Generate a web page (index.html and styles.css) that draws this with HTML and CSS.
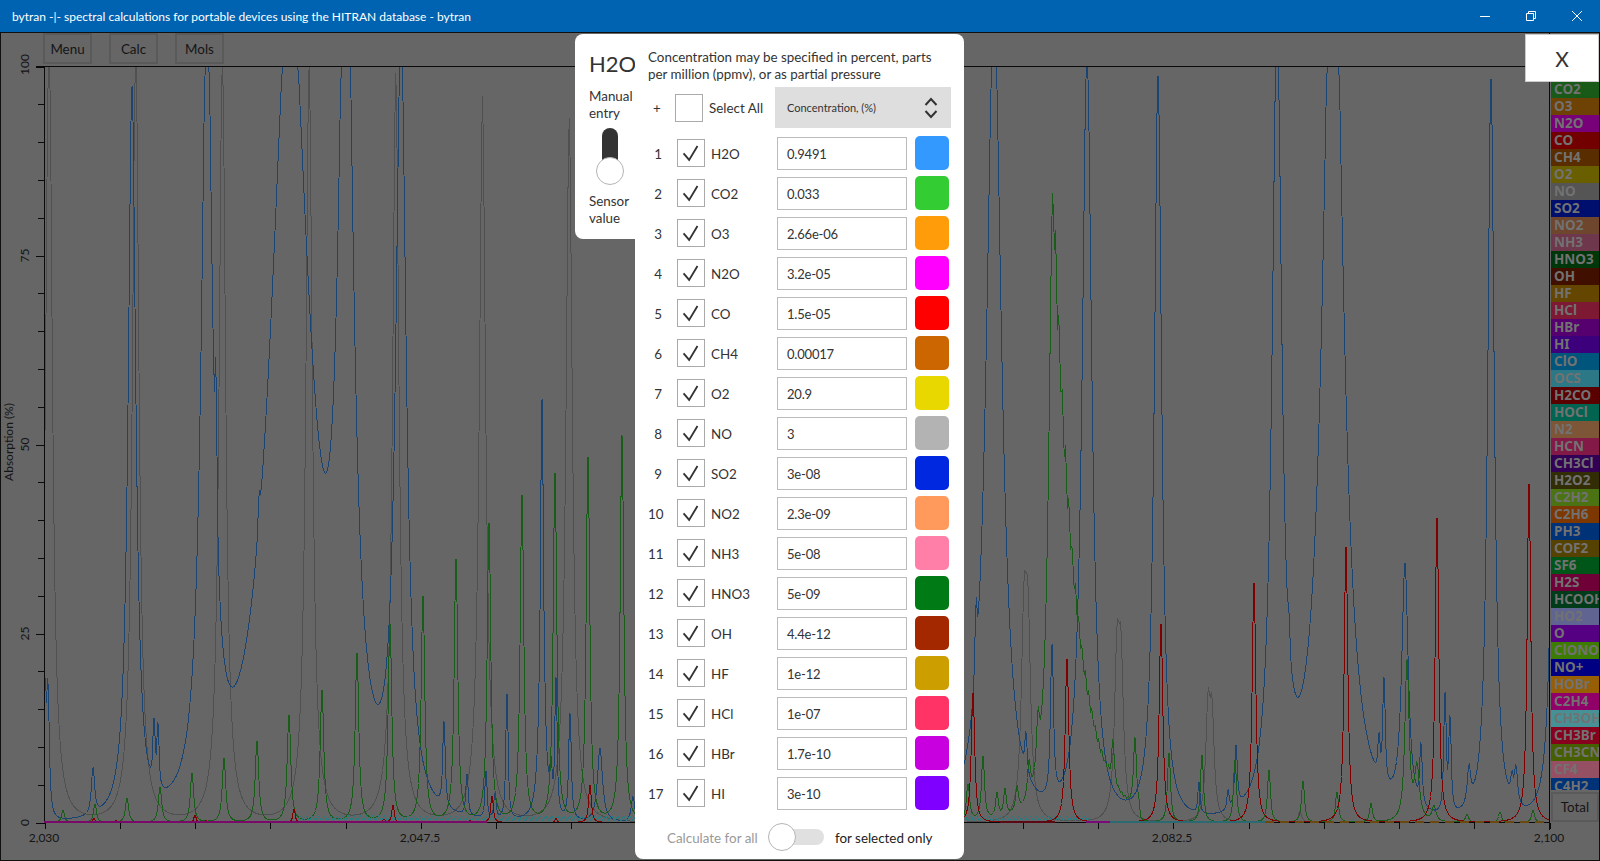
FILE: index.html
```html
<!DOCTYPE html>
<html lang="en">
<head>
<meta charset="utf-8">
<title>bytran</title>
<link rel="stylesheet" href="styles.css">
</head>
<body>
<div class="app">
  <header class="titlebar">
    <span class="title">bytran -|- spectral calculations for portable devices using the HITRAN database - bytran</span>
    <div class="winctl">
      <svg width="12" height="12" viewBox="0 0 12 12"><path class="wi" d="M1 6.5H11"/></svg>
      <svg width="12" height="12" viewBox="0 0 12 12"><path class="wi" d="M1.5 3.5H8.5V10.5H1.5ZM3.5 3.5V1.5H10.5V8.5H8.5"/></svg>
      <svg width="12" height="12" viewBox="0 0 12 12"><path class="wi" d="M1 1L11 11M11 1L1 11"/></svg>
    </div>
  </header>
  <main class="workspace">
    <section class="plot">
      <svg id="chart" class="chart" viewBox="1 33 1550 827" width="1550" height="827"></svg>
    </section>
    <aside class="molbar">
      <ul class="mollist">
        <li class="c01">H2O</li><li class="c02">CO2</li><li class="c03">O3</li><li class="c04">N2O</li><li class="c05">CO</li>
        <li class="c06">CH4</li><li class="c07">O2</li><li class="c08">NO</li><li class="c09">SO2</li><li class="c10">NO2</li>
        <li class="c11">NH3</li><li class="c12">HNO3</li><li class="c13">OH</li><li class="c14">HF</li><li class="c15">HCl</li>
        <li class="c16">HBr</li><li class="c17">HI</li><li class="c18">ClO</li><li class="c19">OCS</li><li class="c20">H2CO</li>
        <li class="c21">HOCl</li><li class="c22">N2</li><li class="c23">HCN</li><li class="c24">CH3Cl</li><li class="c25">H2O2</li>
        <li class="c26">C2H2</li><li class="c27">C2H6</li><li class="c28">PH3</li><li class="c29">COF2</li><li class="c30">SF6</li>
        <li class="c31">H2S</li><li class="c32">HCOOH</li><li class="c33">HO2</li><li class="c34">O</li><li class="c35">ClONO2</li>
        <li class="c36">NO+</li><li class="c37">HOBr</li><li class="c38">C2H4</li><li class="c39">CH3OH</li><li class="c40">CH3Br</li>
        <li class="c41">CH3CN</li><li class="c42">CF4</li><li class="c43">C4H2</li>
      </ul>
      <button class="dimbtn total">Total</button>
    </aside>

    <nav class="tools">
      <button class="dimbtn">Menu</button>
      <button class="dimbtn">Calc</button>
      <button class="dimbtn">Mols</button>
    </nav>

    <button class="closex">X</button>

    <div class="dialog">
      <div class="sidetab">
        <div class="molname">H2O</div>
        <div class="modetext">Manual entry</div>
        <div class="vtoggle"><span class="vtrack"></span><span class="knob vknob"></span></div>
        <div class="modetext">Sensor value</div>
      </div>
      <div class="sheet">
        <p class="intro">Concentration may be specified in percent, parts per million (ppmv), or as partial pressure</p>
        <div class="headrow">
          <span class="plus">+</span>
          <span class="box"></span>
          <span class="selall">Select All</span>
          <div class="combo">
            <span>Concentration, (%)</span>
            <svg width="14" height="22" viewBox="0 0 14 22"><path class="chev" d="M1.5 8L7 2L12.5 8M1.5 14L7 20L12.5 14"/></svg>
          </div>
        </div>
        <div class="rows">
          <div class="row"><span class="num">1</span><span class="box"><svg class="tick" viewBox="0 0 28 28"><path d="M6 14.5L12 21.5L21 6.5"/></svg></span><span class="mol">H2O</span><span class="field">0.9491</span><span class="swatch s01"></span></div>
          <div class="row"><span class="num">2</span><span class="box"><svg class="tick" viewBox="0 0 28 28"><path d="M6 14.5L12 21.5L21 6.5"/></svg></span><span class="mol">CO2</span><span class="field">0.033</span><span class="swatch s02"></span></div>
          <div class="row"><span class="num">3</span><span class="box"><svg class="tick" viewBox="0 0 28 28"><path d="M6 14.5L12 21.5L21 6.5"/></svg></span><span class="mol">O3</span><span class="field">2.66e-06</span><span class="swatch s03"></span></div>
          <div class="row"><span class="num">4</span><span class="box"><svg class="tick" viewBox="0 0 28 28"><path d="M6 14.5L12 21.5L21 6.5"/></svg></span><span class="mol">N2O</span><span class="field">3.2e-05</span><span class="swatch s04"></span></div>
          <div class="row"><span class="num">5</span><span class="box"><svg class="tick" viewBox="0 0 28 28"><path d="M6 14.5L12 21.5L21 6.5"/></svg></span><span class="mol">CO</span><span class="field">1.5e-05</span><span class="swatch s05"></span></div>
          <div class="row"><span class="num">6</span><span class="box"><svg class="tick" viewBox="0 0 28 28"><path d="M6 14.5L12 21.5L21 6.5"/></svg></span><span class="mol">CH4</span><span class="field">0.00017</span><span class="swatch s06"></span></div>
          <div class="row"><span class="num">7</span><span class="box"><svg class="tick" viewBox="0 0 28 28"><path d="M6 14.5L12 21.5L21 6.5"/></svg></span><span class="mol">O2</span><span class="field">20.9</span><span class="swatch s07"></span></div>
          <div class="row"><span class="num">8</span><span class="box"><svg class="tick" viewBox="0 0 28 28"><path d="M6 14.5L12 21.5L21 6.5"/></svg></span><span class="mol">NO</span><span class="field">3</span><span class="swatch s08"></span></div>
          <div class="row"><span class="num">9</span><span class="box"><svg class="tick" viewBox="0 0 28 28"><path d="M6 14.5L12 21.5L21 6.5"/></svg></span><span class="mol">SO2</span><span class="field">3e-08</span><span class="swatch s09"></span></div>
          <div class="row"><span class="num">10</span><span class="box"><svg class="tick" viewBox="0 0 28 28"><path d="M6 14.5L12 21.5L21 6.5"/></svg></span><span class="mol">NO2</span><span class="field">2.3e-09</span><span class="swatch s10"></span></div>
          <div class="row"><span class="num">11</span><span class="box"><svg class="tick" viewBox="0 0 28 28"><path d="M6 14.5L12 21.5L21 6.5"/></svg></span><span class="mol">NH3</span><span class="field">5e-08</span><span class="swatch s11"></span></div>
          <div class="row"><span class="num">12</span><span class="box"><svg class="tick" viewBox="0 0 28 28"><path d="M6 14.5L12 21.5L21 6.5"/></svg></span><span class="mol">HNO3</span><span class="field">5e-09</span><span class="swatch s12"></span></div>
          <div class="row"><span class="num">13</span><span class="box"><svg class="tick" viewBox="0 0 28 28"><path d="M6 14.5L12 21.5L21 6.5"/></svg></span><span class="mol">OH</span><span class="field">4.4e-12</span><span class="swatch s13"></span></div>
          <div class="row"><span class="num">14</span><span class="box"><svg class="tick" viewBox="0 0 28 28"><path d="M6 14.5L12 21.5L21 6.5"/></svg></span><span class="mol">HF</span><span class="field">1e-12</span><span class="swatch s14"></span></div>
          <div class="row"><span class="num">15</span><span class="box"><svg class="tick" viewBox="0 0 28 28"><path d="M6 14.5L12 21.5L21 6.5"/></svg></span><span class="mol">HCl</span><span class="field">1e-07</span><span class="swatch s15"></span></div>
          <div class="row"><span class="num">16</span><span class="box"><svg class="tick" viewBox="0 0 28 28"><path d="M6 14.5L12 21.5L21 6.5"/></svg></span><span class="mol">HBr</span><span class="field">1.7e-10</span><span class="swatch s16"></span></div>
          <div class="row"><span class="num">17</span><span class="box"><svg class="tick" viewBox="0 0 28 28"><path d="M6 14.5L12 21.5L21 6.5"/></svg></span><span class="mol">HI</span><span class="field">3e-10</span><span class="swatch s17"></span></div>
        </div>
        <div class="foot">
          <span class="muted">Calculate for all</span>
          <div class="htoggle"><span class="htrack"></span><span class="knob hknob"></span></div>
          <span class="on">for selected only</span>
        </div>
      </div>
    </div>
  </main>
</div>
<script src="chart.js"></script>
</body>
</html>
```
FILE: styles.css
```css
* { box-sizing: border-box; }
html, body { margin: 0; padding: 0; height: 100%; overflow: hidden; }
body { font-family: Lato, "Noto Sans", "Liberation Sans", sans-serif; color: #333; background: #666; }
.app { width: 1600px; height: 861px; display: flex; flex-direction: column; }

.titlebar { height: 32px; flex: none; background: #0063b1; color: #fff; display: flex; align-items: center; justify-content: space-between; padding-left: 12px; }
.title { font-size: 12px; white-space: nowrap; }
.winctl { display: flex; gap: 34px; padding-right: 17px; }
.winctl svg { display: block; }
.wi { fill: none; stroke: #fff; stroke-width: 1; }

.workspace { position: relative; flex: 1; min-height: 0; display: flex; background: #666; border: 1px solid #101010; }
.plot { flex: none; width: 1550px; }
.chart { display: block; overflow: visible; position: relative; z-index: 1; }
.chart text { font-family: Lato, "Noto Sans", sans-serif; font-size: 12px; fill: #141414; }
.curve { fill: none; stroke-width: 1; shape-rendering: crispEdges; }
.axis { stroke: #0a0a0a; stroke-width: 1; shape-rendering: crispEdges; }
.base { stroke-width: 2; shape-rendering: crispEdges; }

.molbar { flex: 1; min-width: 0; padding-top: 31px; display: flex; flex-direction: column; }
.mollist { list-style: none; margin: 0; padding: 0; height: 726px; overflow: hidden; }
.mollist li { height: 17px; line-height: 17px; padding-left: 3px; font-family: "Noto Sans", sans-serif; font-size: 13.5px; font-weight: 700; color: #727272; white-space: nowrap; overflow: hidden; }
.total { margin-top: 2px; height: 30px; width: 100%; }

.dimbtn { background: #666; border: 2px solid #5a5a5a; color: #151515; font: 13.4px Lato, "Noto Sans", sans-serif; padding: 0; }
.tools { position: absolute; left: 42px; top: 0; display: flex; gap: 17px; z-index: 2; }
.tools .dimbtn { width: 49px; height: 31px; }

.closex { position: absolute; right: 0; top: 1px; width: 74px; height: 48px; background: #fff; border: 1px solid #ccc; color: #333; font: 21px Lato, "Noto Sans", sans-serif; padding: 0; z-index: 2; }

.dialog { position: absolute; left: 574px; top: 1px; display: flex; align-items: flex-start; z-index: 2; }
.sidetab { width: 60px; height: 205px; background: #fff; border-radius: 8px 0 0 8px; padding: 14px 0 0 14px; }
.molname { font-size: 22px; line-height: 32px; color: #333; }
.modetext { font-size: 13.4px; line-height: 17px; width: 46px; color: #333; }
.molname + .modetext { margin-top: 8px; }
.vtoggle { position: relative; height: 58px; margin: 6px 0 7px; }
.vtrack { position: absolute; left: 13px; top: 0; width: 16px; height: 40px; border-radius: 8px 8px 0 0; background: #333; }
.knob { position: absolute; width: 28px; height: 28px; border-radius: 50%; background: #fff; border: 1px solid #b5b5b5; }
.vknob { left: 7px; top: 29px; }

.sheet { width: 329px; height: 825px; background: #fff; border-radius: 0 8px 8px 8px; padding: 15px 0 0 13px; }
.intro { margin: 0; width: 300px; font-size: 13.4px; line-height: 17px; color: #333; }
.headrow { display: flex; align-items: center; height: 41px; margin-top: 4px; }
.plus { width: 27px; padding-left: 5px; font-size: 13.4px; }
.selall { margin-left: 6px; width: 66px; font-size: 13.4px; padding-top: 1px; }
.box { flex: none; width: 28px; height: 28px; border: 1px solid #aaa; background: #fff; display: block; }
.combo { width: 176px; height: 41px; background: #dedede; display: flex; align-items: center; justify-content: space-between; padding: 0 13px 0 12px; font-size: 11px; color: #333; }
.chev, .tick path { fill: none; stroke: #333; stroke-width: 2; }
.tick { display: block; width: 26px; height: 26px; }

.rows { display: flex; flex-direction: column; gap: 6px; margin-top: 8px; }
.row { display: flex; align-items: center; height: 34px; font-size: 13.4px; }
.num { width: 14px; text-align: right; margin-right: 15px; padding-top: 2px; }
.mol { width: 66px; margin-left: 6px; padding-top: 2px; }
.field { width: 130px; height: 33px; border: 1px solid #bbb; line-height: 33px; padding-left: 9px; font-size: 13px; letter-spacing: -0.2px; }
.swatch { width: 34px; height: 34px; border-radius: 5px; margin-left: 8px; }
.s01 { background: #3399ff; } .s02 { background: #33cc33; } .s03 { background: #ff9c0a; } .s04 { background: #ff00ff; }
.s05 { background: #ff0000; } .s06 { background: #cc6600; } .s07 { background: #e8d800; } .s08 { background: #b3b3b3; }
.s09 { background: #0028e0; } .s10 { background: #ff9a5c; } .s11 { background: #ff7fa8; } .s12 { background: #007a14; }
.s13 { background: #a32800; } .s14 { background: #cc9e00; } .s15 { background: #ff3366; } .s16 { background: #c800e0; }
.s17 { background: #7f00ff; }

.foot { display: flex; align-items: center; height: 28px; margin-top: 13px; font-size: 13.4px; }
.muted { margin-left: 19px; width: 101px; color: #999; padding-top: 2px; }
.htoggle { position: relative; width: 56px; height: 28px; }
.htrack { position: absolute; left: 14px; right: 0; top: 6px; height: 16px; border-radius: 0 8px 8px 0; background: #e0e0e0; }
.hknob { left: 0; top: 0; }
.on { margin-left: 11px; color: #222; padding-top: 2px; }

.c01 { background: #1a4a80; } .c02 { background: #195a19; } .c03 { background: #6e4105; } .c04 { background: #780078; }
.c05 { background: #730000; } .c06 { background: #5a2d00; } .c07 { background: #695f00; } .c08 { background: #555555; }
.c09 { background: #000f6e; } .c10 { background: #6e462d; } .c11 { background: #6e374b; } .c12 { background: #00370a; }
.c13 { background: #410f00; } .c14 { background: #644600; } .c15 { background: #7d1932; } .c16 { background: #55006e; }
.c17 { background: #3c007d; } .c18 { background: #00557d; } .c19 { background: #2d7887; } .c20 { background: #5a0000; }
.c21 { background: #006450; } .c22 { background: #7d5537; } .c23 { background: #821946; } .c24 { background: #320055; }
.c25 { background: #322d05; } .c26 { background: #4b7314; } .c27 { background: #7d3700; } .c28 { background: #003278; }
.c29 { background: #554100; } .c30 { background: #005519; } .c31 { background: #6e0037; } .c32 { background: #003c19; }
.c33 { background: #5f6491; } .c34 { background: #550082; } .c35 { background: #3c7d00; } .c36 { background: #000082; }
.c37 { background: #965f05; } .c38 { background: #910069; } .c39 { background: #469196; } .c40 { background: #87001e; }
.c41 { background: #465f00; } .c42 { background: #965064; } .c43 { background: #003278; }
```
FILE: chart.js
```javascript
(function () {
  var NS = "http://www.w3.org/2000/svg";
  var svg = document.getElementById("chart");
  var L = 44.5, R = 1549.5, TOP = 66.5, BOT = 822.5, PCT = 7.56, FALL = 80;

  function el(name, attrs, parent, text) {
    var e = document.createElementNS(NS, name);
    for (var k in attrs) e.setAttribute(k, attrs[k]);
    if (text) e.textContent = text;
    (parent || svg).appendChild(e);
    return e;
  }
  function seq(x0, dx, heights, w) {
    return heights.map(function (h, i) { return [x0 + i * dx, h, w]; });
  }

  var gray = seq(49, 86.7, [110, 106, 104, 102, 100, 96, 94], 3.9)
    .concat([[1024, 24, 3.2], [1028, 23, 3.2], [1117, 20, 3], [1121, 19, 3], [1208, 14, 2.6], [1212, 13, 2.6], [1300, 1.5, 2]]);

  var blue = [
    [45, 17, 1.4], [48, 17, 1.4], [93, 6.5, 1.8], [132, 98, 4.7], [154, 10, 1], [158, 10, 1],
    [207, 108, 7], [216, 22, 0.8], [290, 116, 30], [259, 5, 0.8], [346, 118, 9], [401, 104, 6.5],
    [444, 13, 1.2], [467, 6.5, 1.1], [486, 8, 0.9], [495, 4, 1], [507, 20, 1.1], [542, 30, 0.9], [542, 34, 2.8],
    [551, 6, 1], [556, 22, 1], [570, 16, 1.3], [600, 10, 3], [633, 3.5, 2],
    [976, 10, 1], [994, 110, 10], [1026, 6, 1], [1052, 22, 1.6], [1087, 104, 6], [1158, 100, 4.5],
    [1199, 5, 1], [1228, 3, 1], [1236, 9, 1.4], [1277, 106, 6], [1289, 5, 0.7], [1333, 132, 13],
    [1379, 6, 1], [1384, 16, 1.2], [1405, 33, 4], [1421, 9, 1.2], [1445, 18, 1.2], [1450, 14, 1.2],
    [1469, 5, 2], [1491, 100, 4], [1512, 3, 1.5], [1516, 5, 1.8], [1556, 100, 4]
  ];
  var green = [
    [63, 1.8, 1.6], [95, 2.6, 1.6], [127, 3.5, 1.7], [160, 5, 1.8], [192, 7, 1.8], [224, 9, 1.9], [257, 11.5, 1.9],
    [289, 15, 2], [322, 18.5, 2], [357, 23.7, 2], [390, 27.8, 2], [423, 31.8, 2], [456, 37, 2], [489, 42, 2],
    [522, 46, 2], [555, 49, 2], [588, 51.4, 2], [622, 54.5, 2],
    [968, 5, 1.8], [983, 9, 1.6], [997, 3.5, 1.4], [1005, 3.8, 1.4], [1017, 3.4, 1.5], [1029, 5, 1.6], [1038, 7, 1.6],
    [1113, 6, 1.3], [1135, 10, 1.6], [1169, 10, 1.6], [1202, 9.8, 1.6], [1235, 9, 1.6], [1269, 7.6, 1.6], [1303, 6, 1.6],
    [1337, 4.4, 1.6], [1371, 2.7, 1.5], [1407, 22, 2.4], [1417, 7, 3], [1434, 2, 2.4], [1467, 1.2, 1.6], [1500, 1.5, 1.6], [1533, 1.8, 1.6]
  ];
  var red = [
    [94, 0.7, 1], [116, 0.3, 1], [195, 1.2, 1], [206, 0.3, 1], [294, 2.1, 1.1], [384, 0.5, 1], [393, 2.6, 1.2], [470, 0.4, 1],
    [492, 4, 1.3], [556, 0.6, 1], [590, 5.5, 1.4],
    [973, 18.3, 1.9], [1067, 23, 2], [1161, 28, 2], [1254, 33.8, 2], [1346, 38.9, 2], [1437, 43, 2], [1529, 47.8, 2]
  ];

  function band(x) {
    if (x < 964 || x > 1140) return 0;
    if (x < 1053) return 84 / (1 + Math.pow((1053 - x) / 5, 2));
    return 84 * Math.exp(-(x - 1053) / 22) * (1 + 0.05 * Math.sin(x * 1.9));
  }
  function ripple(x) {
    var on = (x > 298 && x < 640) || (x > 960 && x < 1090);
    if (!on) return -1;
    return 0.55 + 0.28 * Math.sin(x * 1.05);
  }

  function spectrum(peaks, extra) {
    var pts = [];
    for (var x = 44.5; x <= 1549.5; x += 1) {
      var a = extra ? extra(x) : 0;
      for (var i = 0; i < peaks.length; i++) {
        var dx = x - peaks[i][0];
        var d = dx / peaks[i][2];
        a += peaks[i][1] / (1 + d * d) * Math.exp(-Math.abs(dx) / FALL);
      }
      a = Math.min(a, 100);
      pts.push(x + "," + (BOT - a * PCT).toFixed(1));
    }
    return pts.join(" ");
  }

  el("polyline", { "class": "curve", points: spectrum(gray), stroke: "#505050" });
  el("polyline", { "class": "curve", points: spectrum(blue), stroke: "#1a4474" });
  el("polyline", { "class": "curve", points: spectrum(green, band), stroke: "#185e18" });

  var teal = [];
  for (var tx = 298.5; tx < 1090; tx += 1) {
    var t = ripple(tx);
    if (t >= 0) teal.push(tx + "," + (BOT - t * PCT).toFixed(1));
    else if (teal.length && teal[teal.length - 1] !== "gap") teal.push("gap");
  }
  teal.join(" ").split("gap").forEach(function (s) {
    if (s.trim()) el("polyline", { "class": "curve", points: s.trim(), stroke: "#2a7a80" });
  });

  el("polyline", { "class": "curve", points: spectrum(red), stroke: "#800000" });

  el("line", { "class": "axis", x1: 36, y1: TOP, x2: 1549, y2: TOP });
  el("line", { "class": "axis", x1: L, y1: TOP, x2: L, y2: BOT });
  el("line", { "class": "axis", x1: R, y1: 33, x2: R, y2: 830 });
  el("line", { "class": "axis", x1: L, y1: BOT, x2: R, y2: BOT });

  el("line", { "class": "base", x1: 44, y1: 822, x2: 487, y2: 822, stroke: "#7a0a6a" });
  el("line", { "class": "base", x1: 1000, y1: 822, x2: 1055, y2: 822, stroke: "#5a0a14" });
  el("line", { "class": "base", x1: 1086, y1: 822, x2: 1110, y2: 822, stroke: "#7a0a7a" });
  el("line", { "class": "base", x1: 1110, y1: 822, x2: 1265, y2: 822, stroke: "#2a6a70" });
  el("line", { "class": "base", x1: 1265, y1: 822, x2: 1549, y2: 822, stroke: "#6a4a10", "stroke-dasharray": "9 6" });

  for (var i = 0; i <= 20; i++) {
    var ty = Math.round(TOP + i * 37.8) + 0.5;
    var major = i % 5 === 0;
    el("line", { "class": "axis", x1: major ? 36 : 38, y1: ty, x2: L, y2: ty });
    if (major) {
      var ly = ty - (i === 0 ? 3 : 1);
      el("text", { x: 29, y: ly, transform: "rotate(-90 29 " + ly + ")", "text-anchor": "middle" }, svg, String(100 - i * 5));
    }
  }
  for (var j = 0; j <= 20; j++) {
    var tx2 = Math.round(L + j * 75.25) + 0.5;
    el("line", { "class": "axis", x1: tx2, y1: BOT, x2: tx2, y2: 829 });
  }
  [["2,030", 44], ["2,047.5", 420], ["2,082.5", 1172], ["2,100", 1549]].forEach(function (a) {
    el("text", { x: a[1], y: 842, "text-anchor": "middle" }, svg, a[0]);
  });
  el("text", { x: 13, y: 442, transform: "rotate(-90 13 442)", "text-anchor": "middle" }, svg, "Absorption (%)");
})();
```
